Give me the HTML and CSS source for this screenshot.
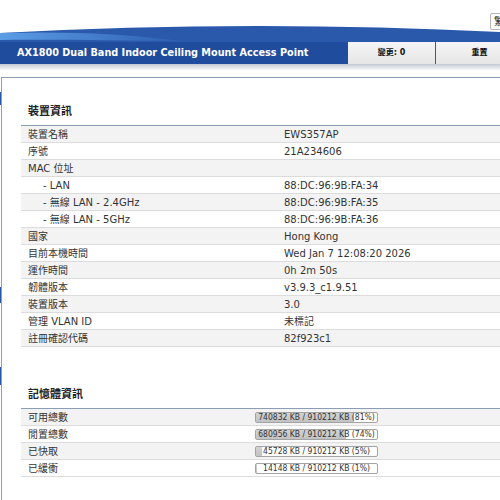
FILE: index.html
```html
<!DOCTYPE html>
<html lang="zh-Hant">
<head>
    <meta charset="UTF-8">
    <title>AX1800 Dual Band Indoor Ceiling Mount Access Point</title>
    <link rel="stylesheet" href="styles.css">
</head>
<body>
    <div class="page">
        <div class="masthead">
            <svg class="swoosh" width="620" height="42" viewBox="0 0 620 42">
                <defs>
                    <linearGradient id="streak" x1="0" y1="0" x2="1" y2="0">
                        <stop offset="0" stop-color="#5c9de6"/>
                        <stop offset="1" stop-color="#2c5db0"/>
                    </linearGradient>
                </defs>
                <path d="M0,33 Q250,19.5 500,32 L620,36 L620,42 L0,42 Z" fill="#2a59ab"/>
                <path d="M0,33 C70,31 130,34 185,41.5 C120,40.5 60,39.5 0,40 Z" fill="url(#streak)"/>
            </svg>
            <div class="lang">繁體中文</div>
        </div>

        <div class="titlebar">
            <div class="model">AX1800 Dual Band Indoor Ceiling Mount Access Point</div>
            <div class="tb-btn changes">變更: 0</div>
            <div class="tb-btn">重置</div>
        </div>
        <div class="shade"></div>

        <div class="frame">
            <div class="section">
                <h2>裝置資訊</h2>
                <table class="info">
                    <tr><td>裝置名稱</td><td>EWS357AP</td></tr>
                    <tr><td>序號</td><td>21A234606</td></tr>
                    <tr><td>MAC 位址</td><td></td></tr>
                    <tr><td class="sub">- LAN</td><td>88:DC:96:9B:FA:34</td></tr>
                    <tr><td class="sub">- 無線 LAN - 2.4GHz</td><td>88:DC:96:9B:FA:35</td></tr>
                    <tr><td class="sub">- 無線 LAN - 5GHz</td><td>88:DC:96:9B:FA:36</td></tr>
                    <tr><td>國家</td><td>Hong Kong</td></tr>
                    <tr><td>目前本機時間</td><td>Wed Jan 7 12:08:20 2026</td></tr>
                    <tr><td>運作時間</td><td>0h 2m 50s</td></tr>
                    <tr><td>韌體版本</td><td>v3.9.3_c1.9.51</td></tr>
                    <tr><td>裝置版本</td><td>3.0</td></tr>
                    <tr><td>管理 VLAN ID</td><td>未標記</td></tr>
                    <tr><td>註冊確認代碼</td><td>82f923c1</td></tr>
                </table>
            </div>

            <div class="section mem">
                <h2>記憶體資訊</h2>
                <table class="info memory">
                    <tr><td>可用總數</td><td><div class="bar"><div class="fill" style="width: 81%"></div><span>740832 KB / 910212 KB (81%)</span></div></td></tr>
                    <tr><td>閒置總數</td><td><div class="bar"><div class="fill" style="width: 74%"></div><span>680956 KB / 910212 KB (74%)</span></div></td></tr>
                    <tr><td>已快取</td><td><div class="bar"><div class="fill" style="width: 5%"></div><span>45728 KB / 910212 KB (5%)</span></div></td></tr>
                    <tr><td>已緩衝</td><td><div class="bar"><div class="fill" style="width: 1%"></div><span>14148 KB / 910212 KB (1%)</span></div></td></tr>
                </table>
            </div>
        </div>
    </div>
</body>
</html>
```

FILE: styles.css
```css
html, body {
    margin: 0;
    padding: 0;
    overflow: hidden;
    background: #fff;
}

body {
    font-family: "DejaVu Sans", "Noto Sans CJK TC", sans-serif;
    font-size: 10px;
    color: #333;
}

.page {
    width: 620px;
    background: linear-gradient(to bottom,
        transparent 92px, #2a59ab 92px, #2a59ab 105px, transparent 105px,
        transparent 287px, #2a59ab 287px, #2a59ab 303px, transparent 303px,
        transparent 367px, #2a59ab 367px, #2a59ab 385px, transparent 385px) no-repeat;
    background-size: 1px 100%;
}

.masthead {
    position: relative;
    height: 42px;
    background: #fff;
}

.swoosh {
    display: block;
}

.lang {
    position: absolute;
    top: 13px;
    left: 490px;
    height: 15px;
    padding: 0 3px;
    line-height: 15px;
    font-size: 10px;
    color: #222;
    background: #fff;
    border: 1px solid #b5b5b5;
    border-radius: 2px;
    white-space: nowrap;
}

.titlebar {
    display: flex;
    height: 22px;
    background: #1f4c9d;
}

.model {
    width: 331px;
    padding-left: 17px;
    line-height: 22px;
    color: #fff;
    font-weight: bold;
    font-size: 9.7px;
    white-space: nowrap;
}

.tb-btn {
    width: 87px;
    line-height: 22px;
    text-align: center;
    font-weight: bold;
    font-size: 8px;
    color: #111;
    background: linear-gradient(#f5f5f5, #e6e6e6);
}

.tb-btn.changes {
    border-right: 1px solid #48587a;
}

.shade {
    height: 7px;
    background: linear-gradient(#c3c8d1, #fff);
}

.frame {
    margin: 6px 0 0 1px;
    border-top: 1px solid #8c9eb6;
    border-left: 1px solid #8c9eb6;
    height: 440px;
}

.section {
    padding: 25px 0 0 19px;
}

.section.mem {
    padding-top: 39px;
}

.section h2 {
    margin: 0 0 6px 0;
    padding: 2px 0 0 7px;
    font-size: 11px;
    line-height: 14px;
    font-weight: bold;
    color: #222;
}

.info {
    width: 560px;
    border-collapse: collapse;
    border-top: 1px solid #8c9eb6;
}

.info td {
    height: 15px;
    padding: 1px 0 0 7px;
    border-bottom: 1px solid #dcdcdc;
    line-height: 15px;
    white-space: nowrap;
}

.info tr:nth-child(odd) td {
    background: #f3f3f3;
}

.info td:first-child {
    width: 249px;
}

.info td.sub {
    padding-left: 22px;
    width: 234px;
}

.memory td:first-child {
    width: 227px;
}

.memory td:last-child {
    padding: 0;
    height: 16px;
}

.bar {
    position: relative;
    width: 121px;
    height: 9px;
    border: 1px solid #a3a3a3;
    border-radius: 2px;
    background: #fff;
}

.bar .fill {
    height: 100%;
    background: linear-gradient(#d2d2d2, #c2c2c2);
}

.bar span {
    position: absolute;
    left: 0;
    right: 0;
    top: 0;
    text-align: center;
    font-family: "DejaVu Sans Condensed", "DejaVu Sans", sans-serif;
    font-size: 8.5px;
    line-height: 9px;
    color: #333;
}
```
